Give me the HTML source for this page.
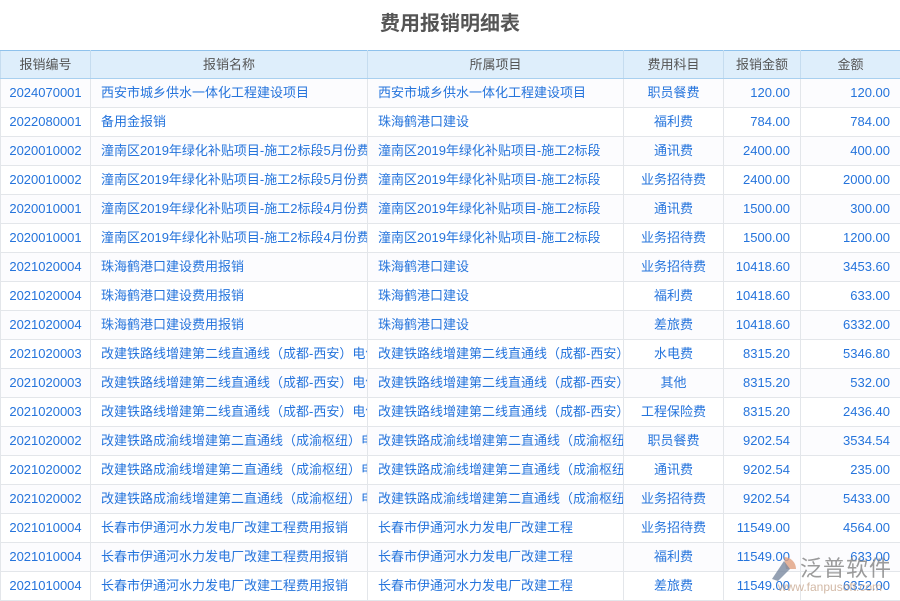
<!DOCTYPE html><html><head><meta charset="utf-8"><style>
body{margin:0;width:900px;height:600px;overflow:hidden;background:#fff;font-family:"Liberation Sans","Noto Sans CJK SC",sans-serif;position:relative}
h1{margin:0;height:50px;line-height:48px;text-align:center;font-size:20px;color:#555;font-weight:bold}
table{border-collapse:collapse;table-layout:fixed;width:900px;font-size:13px;line-height:16px}
th{height:27px;padding:0;background:#deeefb;color:#555;font-weight:normal;border:1px solid #c5dcef;border-top:1px solid #8fc2ec;border-bottom:1px solid #a9d0ef}
td{height:28px;padding:0 10px;border:1px solid #e3e6ea;color:#2574dc;white-space:nowrap;overflow:hidden}
td.c{text-align:center;padding:0}td.r{text-align:right}
tr:nth-child(even) td{background:#fcfcfe}
.wm{position:absolute;left:800px;top:551px;font-size:22px;color:#8a8a8a;opacity:.85;letter-spacing:1px}
.wm2{position:absolute;left:778px;top:580px;font-size:12px;color:#c8a890;opacity:.8}
</style></head><body>
<h1>费用报销明细表</h1>
<table><colgroup><col style="width:90px"><col style="width:277px"><col style="width:256px"><col style="width:100px"><col style="width:77px"><col style="width:100px"></colgroup>
<tr><th>报销编号</th><th>报销名称</th><th>所属项目</th><th>费用科目</th><th>报销金额</th><th>金额</th></tr>
<tr><td class="c">2024070001</td><td>西安市城乡供水一体化工程建设项目</td><td>西安市城乡供水一体化工程建设项目</td><td class="c">职员餐费</td><td class="r">120.00</td><td class="r">120.00</td></tr>
<tr><td class="c">2022080001</td><td>备用金报销</td><td>珠海鹤港口建设</td><td class="c">福利费</td><td class="r">784.00</td><td class="r">784.00</td></tr>
<tr><td class="c">2020010002</td><td>潼南区2019年绿化补贴项目-施工2标段5月份费用</td><td>潼南区2019年绿化补贴项目-施工2标段</td><td class="c">通讯费</td><td class="r">2400.00</td><td class="r">400.00</td></tr>
<tr><td class="c">2020010002</td><td>潼南区2019年绿化补贴项目-施工2标段5月份费用</td><td>潼南区2019年绿化补贴项目-施工2标段</td><td class="c">业务招待费</td><td class="r">2400.00</td><td class="r">2000.00</td></tr>
<tr><td class="c">2020010001</td><td>潼南区2019年绿化补贴项目-施工2标段4月份费用</td><td>潼南区2019年绿化补贴项目-施工2标段</td><td class="c">通讯费</td><td class="r">1500.00</td><td class="r">300.00</td></tr>
<tr><td class="c">2020010001</td><td>潼南区2019年绿化补贴项目-施工2标段4月份费用</td><td>潼南区2019年绿化补贴项目-施工2标段</td><td class="c">业务招待费</td><td class="r">1500.00</td><td class="r">1200.00</td></tr>
<tr><td class="c">2021020004</td><td>珠海鹤港口建设费用报销</td><td>珠海鹤港口建设</td><td class="c">业务招待费</td><td class="r">10418.60</td><td class="r">3453.60</td></tr>
<tr><td class="c">2021020004</td><td>珠海鹤港口建设费用报销</td><td>珠海鹤港口建设</td><td class="c">福利费</td><td class="r">10418.60</td><td class="r">633.00</td></tr>
<tr><td class="c">2021020004</td><td>珠海鹤港口建设费用报销</td><td>珠海鹤港口建设</td><td class="c">差旅费</td><td class="r">10418.60</td><td class="r">6332.00</td></tr>
<tr><td class="c">2021020003</td><td>改建铁路线增建第二线直通线（成都-西安）电气化</td><td>改建铁路线增建第二线直通线（成都-西安）</td><td class="c">水电费</td><td class="r">8315.20</td><td class="r">5346.80</td></tr>
<tr><td class="c">2021020003</td><td>改建铁路线增建第二线直通线（成都-西安）电气化</td><td>改建铁路线增建第二线直通线（成都-西安）</td><td class="c">其他</td><td class="r">8315.20</td><td class="r">532.00</td></tr>
<tr><td class="c">2021020003</td><td>改建铁路线增建第二线直通线（成都-西安）电气化</td><td>改建铁路线增建第二线直通线（成都-西安）</td><td class="c">工程保险费</td><td class="r">8315.20</td><td class="r">2436.40</td></tr>
<tr><td class="c">2021020002</td><td>改建铁路成渝线增建第二直通线（成渝枢纽）电气化</td><td>改建铁路成渝线增建第二直通线（成渝枢纽）</td><td class="c">职员餐费</td><td class="r">9202.54</td><td class="r">3534.54</td></tr>
<tr><td class="c">2021020002</td><td>改建铁路成渝线增建第二直通线（成渝枢纽）电气化</td><td>改建铁路成渝线增建第二直通线（成渝枢纽）</td><td class="c">通讯费</td><td class="r">9202.54</td><td class="r">235.00</td></tr>
<tr><td class="c">2021020002</td><td>改建铁路成渝线增建第二直通线（成渝枢纽）电气化</td><td>改建铁路成渝线增建第二直通线（成渝枢纽）</td><td class="c">业务招待费</td><td class="r">9202.54</td><td class="r">5433.00</td></tr>
<tr><td class="c">2021010004</td><td>长春市伊通河水力发电厂改建工程费用报销</td><td>长春市伊通河水力发电厂改建工程</td><td class="c">业务招待费</td><td class="r">11549.00</td><td class="r">4564.00</td></tr>
<tr><td class="c">2021010004</td><td>长春市伊通河水力发电厂改建工程费用报销</td><td>长春市伊通河水力发电厂改建工程</td><td class="c">福利费</td><td class="r">11549.00</td><td class="r">633.00</td></tr>
<tr><td class="c">2021010004</td><td>长春市伊通河水力发电厂改建工程费用报销</td><td>长春市伊通河水力发电厂改建工程</td><td class="c">差旅费</td><td class="r">11549.00</td><td class="r">6352.00</td></tr>
</table>
<svg style="position:absolute;left:770px;top:555px" width="28" height="28"><path d="M14 2 A12 12 0 0 1 26 14 L16 14 Z" fill="#e0a080" opacity=".8"/><path d="M2 24 L14 6 L20 14 L8 26 Z" fill="#7a8aa0" opacity=".8"/></svg>
<div class="wm">泛普软件</div>
<div class="wm2">www.fanpusoft.com</div>
</body></html>
